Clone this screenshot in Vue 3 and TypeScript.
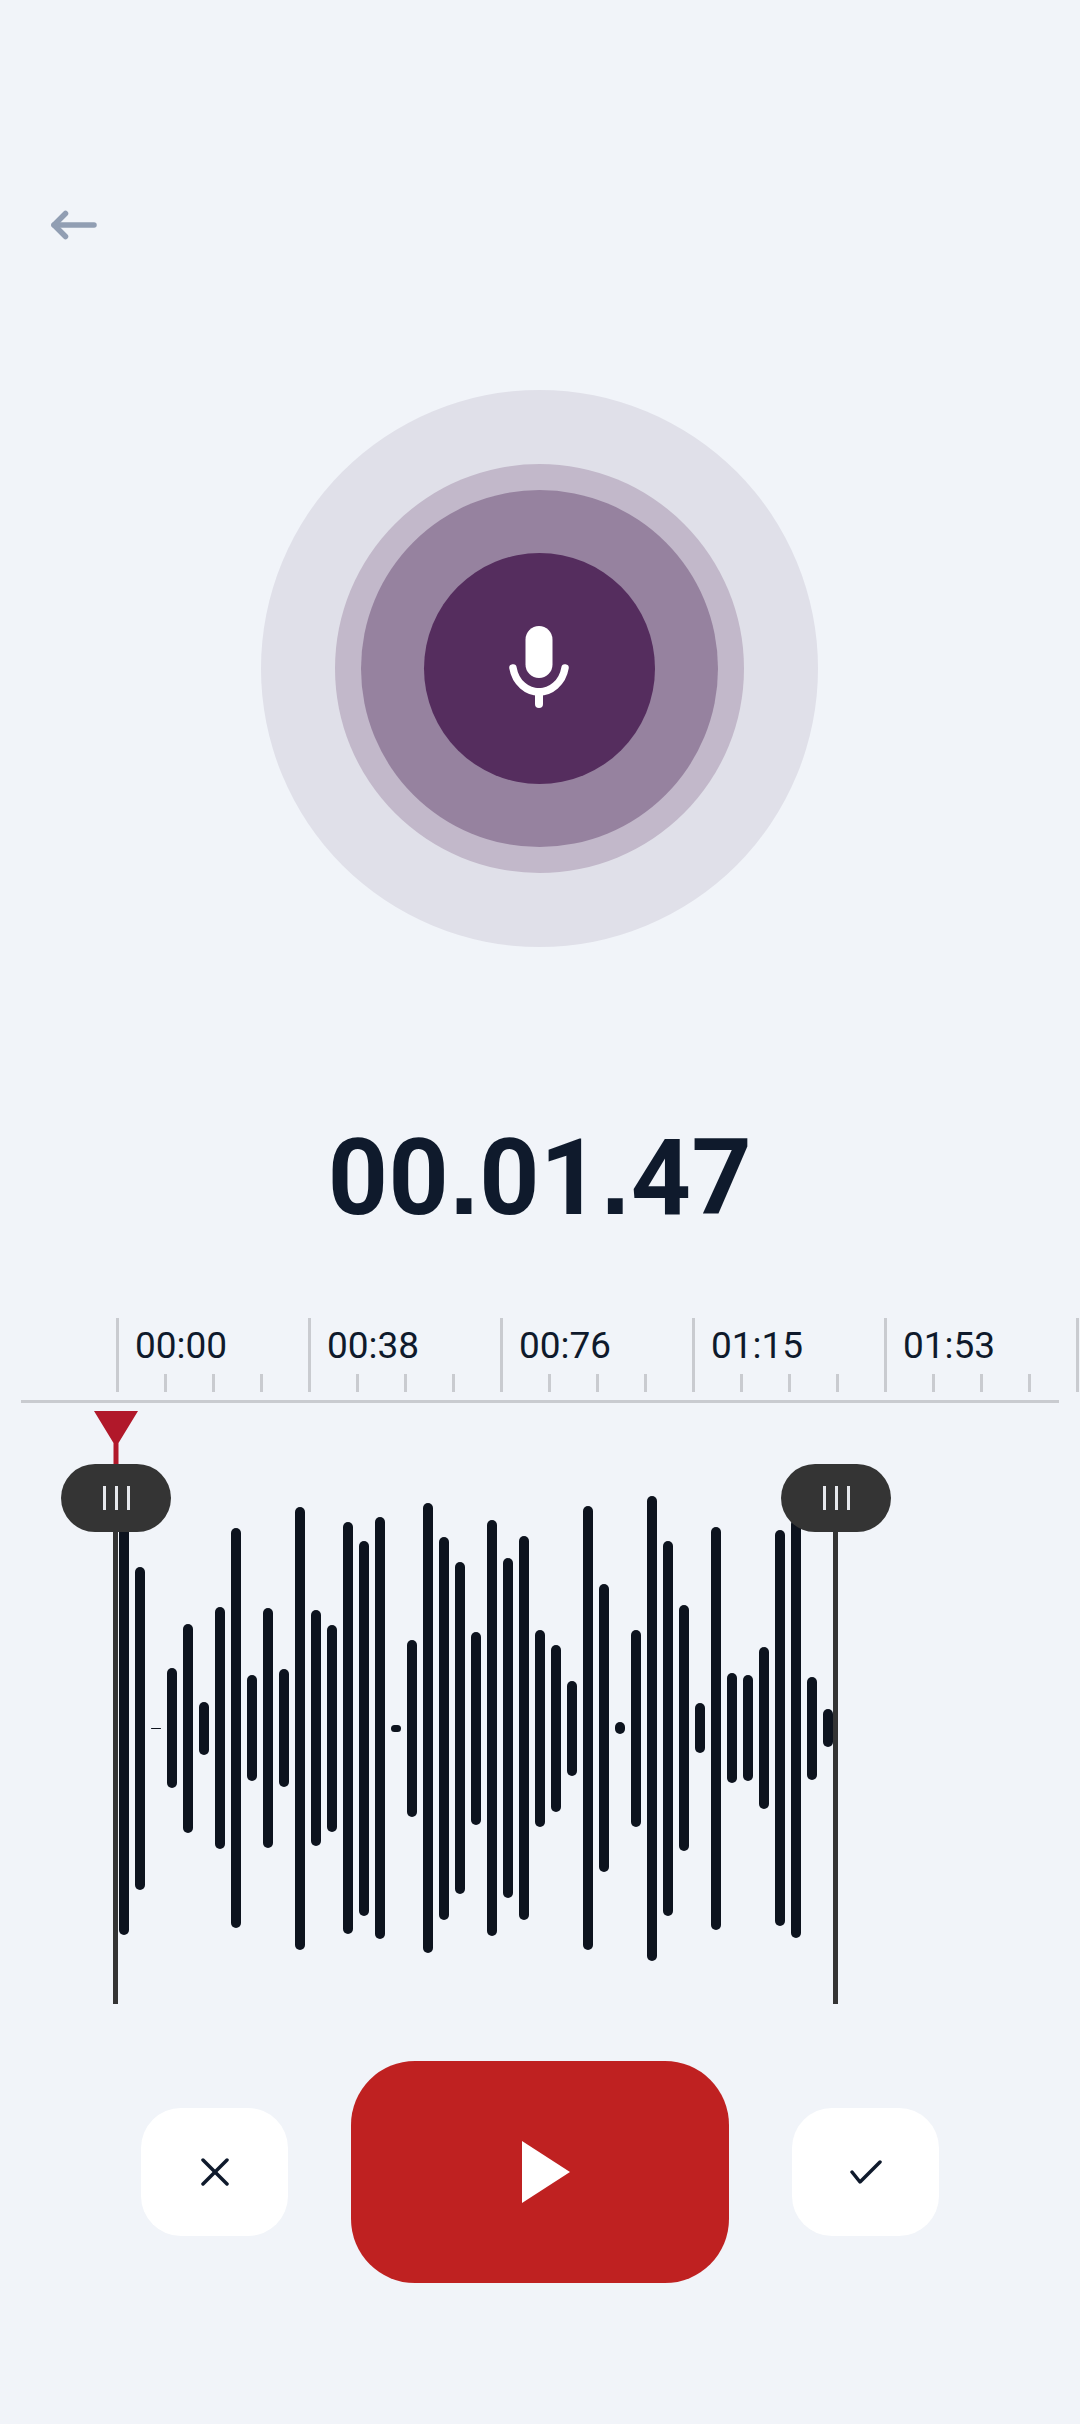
<script setup lang="ts">
const rulerMarks = ['00:00', '00:38', '00:76', '01:15', '01:53', '']

// bar heights in px, left to right
const waveform = [
  413, 323, 1, 120, 209, 53, 242, 400, 106, 240, 118, 443, 236, 207, 412, 375, 422, 7, 177, 450,
  383, 332, 193, 416, 340, 384, 197, 167, 95, 444, 288, 12, 197, 465, 375, 246, 50, 403, 110, 106,
  162, 396, 419, 103, 38,
]
</script>

<template>
  <main class="recorder">
    <header class="recorder__top">
      <button class="back" aria-label="Back">
        <svg width="54" height="38" viewBox="0 0 54 38" fill="none" stroke="#919eb3" stroke-width="5.5" stroke-linecap="round" stroke-linejoin="round">
          <path d="M7 19H47" />
          <path d="M18.500 7.500L7 19L18.500 30.500" />
        </svg>
      </button>
    </header>

    <section class="pulse">
      <div class="pulse__outer">
        <div class="pulse__mid">
          <div class="pulse__inner">
            <div class="pulse__core">
              <svg width="60" height="90" viewBox="0 0 60 90" fill="none">
                <rect x="16.5" y="0" width="27" height="52" rx="13.5" fill="#fff" />
                <path d="M4 42C6.500 57 18.500 66 30 66S53.500 57 56 42" stroke="#fff" stroke-width="7.500" stroke-linecap="round" />
                <path d="M30 66V78" stroke="#fff" stroke-width="8" stroke-linecap="round" />
              </svg>
            </div>
          </div>
        </div>
      </div>
    </section>

    <h1 class="timer">00<span class="timer__dot">.</span>01<span class="timer__dot">.</span>47</h1>

    <section class="ruler">
      <div class="ruler__marks">
        <div v-for="(mark, i) in rulerMarks" :key="i" class="ruler__mark">
          <span class="ruler__label">{{ mark }}</span>
          <div class="ruler__ticks">
            <i v-for="n in 3" :key="n" class="ruler__tick" />
          </div>
        </div>
      </div>
      <div class="ruler__line" />
    </section>

    <section class="trim">
      <div class="wave">
        <span v-for="(h, i) in waveform" :key="i" class="wave__bar" :style="{ height: `${h}px` }" />
      </div>

      <div class="playhead">
        <svg width="44" height="53" viewBox="0 0 44 53">
          <path d="M0 0H44L24.500 32V53H19.500V32Z" fill="#b1182a" />
        </svg>
      </div>

      <div class="handle handle--start">
        <div class="handle__grip"><i /><i /><i /></div>
      </div>
      <div class="handle handle--end">
        <div class="handle__grip"><i /><i /><i /></div>
      </div>
    </section>

    <footer class="controls">
      <button class="controls__side" aria-label="Discard">
        <svg width="28" height="28" viewBox="0 0 28 28" fill="none" stroke="#0f1a2c" stroke-width="3.500" stroke-linecap="round">
          <path d="M2 2L26 26" />
          <path d="M26 2L2 26" />
        </svg>
      </button>
      <button class="controls__play" aria-label="Play">
        <svg width="48" height="62" viewBox="0 0 48 62">
          <path d="M0 0L48 31L0 62Z" fill="#fff" />
        </svg>
      </button>
      <button class="controls__side" aria-label="Save">
        <svg width="32" height="24" viewBox="0 0 32 24" fill="none" stroke="#0f1a2c" stroke-width="3.500" stroke-linecap="round" stroke-linejoin="round">
          <path d="M2 12L10 22L30 2" />
        </svg>
      </button>
    </footer>
  </main>
</template>

<style>
html,
body {
  margin: 0;
  background: #f1f4f9;
}
</style>

<style scoped>
.recorder {
  width: 1080px;
  height: 2424px;
  overflow: hidden;
  background: #f1f4f9;
  font-family: Roboto, 'Liberation Sans', sans-serif;
  font-variant-numeric: tabular-nums;
  color: #0f1a2c;
}

.recorder__top {
  padding: 206px 0 0 47px;
}

.back {
  display: block;
  padding: 0;
  border: 0;
  background: none;
}

.back svg {
  display: block;
}

.pulse {
  display: flex;
  justify-content: center;
  margin-top: 146px;
  padding-right: 2px;
}

.pulse__outer,
.pulse__mid,
.pulse__inner,
.pulse__core {
  display: flex;
  align-items: center;
  justify-content: center;
  border-radius: 50%;
}

.pulse__outer {
  width: 557px;
  height: 557px;
  background: #e0e0e9;
}

.pulse__mid {
  width: 409px;
  height: 409px;
  background: #c2b8ca;
}

.pulse__inner {
  width: 357px;
  height: 357px;
  background: #96829f;
}

.pulse__core {
  width: 231px;
  height: 231px;
  background: #552d5e;
}

.pulse__core svg {
  display: block;
  margin-top: 4px;
}

.timer {
  margin: 171px 0 0;
  font-size: 105px;
  line-height: 122px;
  font-weight: 700;
  font-kerning: none;
  letter-spacing: 0.6px;
  text-align: center;
  color: #0f1a2c;
}

/* square full stop, as in the mock */
.timer__dot {
  font-family: 'Liberation Sans', sans-serif;
  line-height: 0;
}

.ruler {
  margin-top: 78px;
}

.ruler__marks {
  display: flex;
  padding-left: 116px;
  overflow: hidden;
}

.ruler__mark {
  flex: 0 0 192px;
  box-sizing: border-box;
  height: 74px;
  display: flex;
  flex-direction: column;
  border-left: 3px solid #c9cbd0;
}

.ruler__label {
  padding: 7px 0 0 16px;
  height: 42px;
  font-size: 37px;
  line-height: 42px;
  color: #0f1a2c;
}

.ruler__ticks {
  display: flex;
  gap: 45px;
  margin-top: auto;
  padding-left: 45px;
}

.ruler__tick {
  display: block;
  width: 3px;
  height: 18px;
  background: #c9cbd0;
}

.ruler__line {
  height: 3px;
  margin: 8px 21px 0;
  background: #c9cbd0;
}

.trim {
  position: relative;
  height: 593px;
  margin-top: 8px;
  padding-top: 41px;
  box-sizing: border-box;
}

.wave {
  display: flex;
  align-items: center;
  gap: 6px;
  height: 552px;
  padding-left: 119px;
}

.wave__bar {
  flex: 0 0 10px;
  border-radius: 5px;
  background: #0d131e;
}

.playhead {
  position: absolute;
  left: 94px;
  top: 0;
  z-index: 2;
}

.playhead svg {
  display: block;
}

.handle {
  position: absolute;
  top: 53px;
  bottom: 0;
  width: 110px;
  z-index: 3;
}

.handle--start {
  left: 61px;
}

.handle--end {
  left: 781px;
}

.handle::after {
  content: '';
  position: absolute;
  left: 52px;
  top: 68px;
  bottom: 0;
  width: 5px;
  background: #343434;
}

.handle__grip {
  display: flex;
  align-items: center;
  justify-content: center;
  gap: 9px;
  height: 68px;
  border-radius: 34px;
  background: #343434;
}

.handle__grip i {
  display: block;
  width: 3px;
  height: 24px;
  background: #e6e8ec;
}

.controls {
  display: flex;
  align-items: center;
  justify-content: center;
  gap: 63px;
  margin-top: 57px;
}

.controls button {
  display: flex;
  align-items: center;
  justify-content: center;
  padding: 0;
  border: 0;
}

.controls__side {
  width: 147px;
  height: 128px;
  border-radius: 40px;
  background: #fff;
}

.controls__play {
  width: 378px;
  height: 222px;
  border-radius: 64px;
  background: #bf2121;
}

.controls__play svg {
  margin-left: 12px;
}
</style>
